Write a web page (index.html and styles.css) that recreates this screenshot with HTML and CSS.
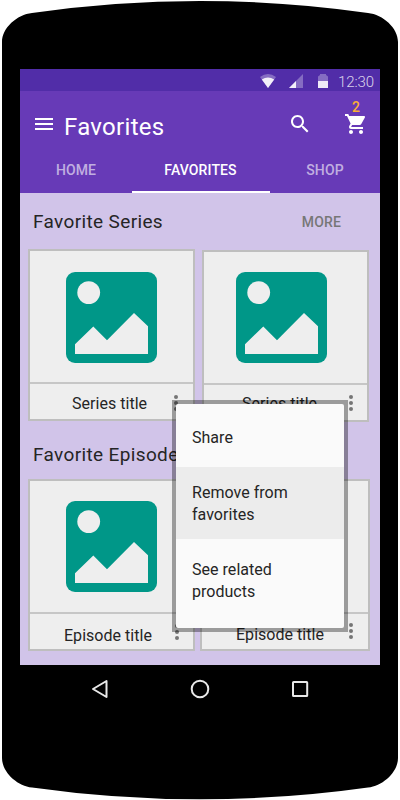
FILE: index.html
```html
<!DOCTYPE html>
<html lang="en">
<head>
<meta charset="utf-8">
<title>Favorites</title>
<link rel="stylesheet" href="styles.css">
</head>
<body>
<svg class="defs" width="0" height="0" aria-hidden="true">
  <symbol id="picture" viewBox="0 0 91 91">
    <rect width="91" height="91" rx="9" fill="#009788"/>
    <circle cx="22.7" cy="20.6" r="11.4" fill="#eee"/>
    <path d="M9 82V72.3L27.3 54.5 41 68.2 68 41 82 54.3V82z" fill="#eee"/>
  </symbol>
  <symbol id="dots" viewBox="0 0 4 16">
    <circle cx="2" cy="2" r="2"/><circle cx="2" cy="8" r="2"/><circle cx="2" cy="14" r="2"/>
  </symbol>
</svg>
<div class="phone">
  <svg class="body" viewBox="0 0 400 800" aria-hidden="true">
    <path d="M2 42C2 28 17 14.5 32 13Q115 1 200 1T368 13C383 14.5 398 28 398 42V758C398 772 383 786 368 787.5Q285 799.300 200 799.300T32 787.500C17 786 2 772 2 758z"/>
  </svg>
  <div class="screen">
    <div class="status">
      <svg class="wifi" width="16" height="14" viewBox="0 0 16 14"><path d="M0 3Q8-3 16 3L8 14z" opacity=".3"/><path d="M1.800 5.400Q8 1.700 14.200 5.400L8 14z" opacity=".9"/></svg>
      <svg class="signal" width="14" height="14" viewBox="0 0 14 14"><path d="M0 14L14 0V14z" opacity=".3"/><path d="M0 14L7 7V14z" opacity=".9"/></svg>
      <svg class="battery" width="10" height="14" viewBox="0 0 10 14"><path d="M0 7V2.500L2 1V0H8V1L10 2.500V7z" opacity=".3"/><path d="M0 7H10V14H0z" opacity=".9"/></svg>
      <span class="time">12:30</span>
    </div>
    <header class="appbar">
      <div class="toolbar">
        <svg class="burger" width="18" height="12" viewBox="0 0 18 12"><path d="M0 0H18V2H0zM0 5H18V7H0zM0 10H18V12H0z"/></svg>
        <h1>Favorites</h1>
        <svg class="search" width="24" height="24" viewBox="0 0 24 24"><path d="M15.500 14h-.79l-.28-.27C15.410 12.590 16 11.110 16 9.500 16 5.910 13.090 3 9.500 3S3 5.910 3 9.500 5.910 16 9.500 16c1.610 0 3.090-.59 4.230-1.570l.27.28v.79l5 4.990L20.490 19l-4.990-5zm-6 0C7.010 14 5 11.990 5 9.500S7.010 5 9.500 5 14 7.010 14 9.500 11.990 14 9.500 14z"/></svg>
        <div class="cart">
          <span class="badge">2</span>
          <svg width="24" height="24" viewBox="0 0 24 24"><path d="M7 18c-1.100 0-1.990.9-1.990 2S5.900 22 7 22s2-.9 2-2-.9-2-2-2zM1 2v2h2l3.600 7.590-1.350 2.450c-.16.28-.25.61-.25.960 0 1.100.9 2 2 2h12v-2H7.420c-.14 0-.25-.11-.25-.25l.03-.12.9-1.630h7.450c.75 0 1.410-.41 1.750-1.030l3.580-6.490c.08-.14.12-.31.12-.48 0-.55-.45-1-1-1H5.210l-.94-2H1zm16 16c-1.100 0-1.990.9-1.990 2s.89 2 1.990 2 2-.9 2-2-.9-2-2-2z"/></svg>
        </div>
      </div>
      <nav class="tabs">
        <span class="tab">HOME</span>
        <span class="tab active">FAVORITES</span>
        <span class="tab">SHOP</span>
      </nav>
    </header>
    <main>
      <div class="heading"><h2>Favorite Series</h2><span class="more">MORE</span></div>
      <div class="cards">
        <article class="card">
          <div class="art"><svg><use href="#picture"/></svg></div>
          <div class="caption"><span>Series title</span><svg class="dots"><use href="#dots"/></svg></div>
        </article>
        <article class="card lower">
          <div class="art"><svg><use href="#picture"/></svg></div>
          <div class="caption"><span>Series title</span><svg class="dots"><use href="#dots"/></svg></div>
        </article>
      </div>
      <div class="heading second"><h2>Favorite Episodes</h2></div>
      <div class="cards episodes">
        <article class="card">
          <div class="art"><svg><use href="#picture"/></svg></div>
          <div class="caption"><span>Episode title</span><svg class="dots"><use href="#dots"/></svg></div>
        </article>
        <article class="card wide">
          <div class="art"><svg><use href="#picture"/></svg></div>
          <div class="caption"><span>Episode title</span><svg class="dots"><use href="#dots"/></svg></div>
        </article>
      </div>
    </main>
    <div class="menu">
      <div class="item share">Share</div>
      <div class="item remove">Remove from favorites</div>
      <div class="item related">See related products</div>
    </div>
  </div>
  <div class="navkeys">
    <svg width="18" height="20" viewBox="0 0 18 20"><path d="M15.500 2V18L2 10z"/></svg>
    <svg width="20" height="20" viewBox="0 0 20 20"><circle cx="10" cy="10" r="8.300"/></svg>
    <svg width="18" height="20" viewBox="0 0 18 20"><rect x="2" y="2.900" width="14.200" height="14.200" rx=".6"/></svg>
  </div>
</div>
</body>
</html>
```
FILE: styles.css
```css
* { box-sizing: border-box; }
body { margin: 0; background: #fff; font-family: Roboto, sans-serif; color: #252525; }
svg { display: block; flex: none; }
.defs { position: absolute; }
.phone { position: relative; width: 400px; height: 800px; padding: 69px 20px 0; overflow: hidden; }
.body { position: absolute; left: 0; top: 0; width: 400px; height: 800px; }
.screen { position: relative; width: 360px; height: 596px; background: #d1c4e9; }

.status { display: flex; align-items: flex-start; height: 22px; padding: 5px 6px 0 0; background: #512da8; fill: #fff; }
.wifi { margin-left: 240px; }
.signal { margin-left: 13px; }
.battery { margin-left: 15px; }
.time { margin: -2px 0 0 auto; font-size: 15px; font-weight: 300; line-height: 20px; letter-spacing: -.1px; color: rgba(255, 255, 255, .8); }

.appbar { height: 102px; background: #673ab7; fill: #fff; }
.toolbar { display: flex; align-items: center; height: 66px; padding-left: 15px; color: #fff; }
.burger { margin-right: 11px; }
h1 { width: 222px; margin: 5px 0 0; font-size: 24px; font-weight: 400; line-height: 32px; letter-spacing: .3px; }
.search { margin-left: 2px; }
.cart { position: relative; margin-left: 32px; }
.badge { position: absolute; left: 8px; top: -13px; font-size: 14px; font-weight: 500; line-height: 16px; color: #fbb034; }
.tabs { display: grid; grid-template-columns: 112px 138px 110px; height: 36px; }
.tab { padding: 5px 1px 0 0; border-bottom: 2px solid transparent; text-align: center; font-size: 14px; font-weight: 500; line-height: 16px; letter-spacing: .12px; color: rgba(255, 255, 255, .6); }
.tab:first-child, .tab:last-child { padding-right: 0; }
.active { color: #fff; border-color: #fff; }

.heading { display: flex; justify-content: space-between; align-items: center; height: 56px; padding: 0 39px 0 13px; }
h2 { margin: 0; font-size: 19px; font-weight: 400; letter-spacing: .36px; white-space: nowrap; }
.more { padding-top: 1px; font-size: 14px; font-weight: 500; letter-spacing: .15px; color: #777; }
.second { height: 57px; padding-top: 7px; }
.cards { display: flex; align-items: flex-start; gap: 7px; padding-left: 8px; }
.episodes { gap: 5px; }
.card { width: 167px; border: 2px solid #bebebe; background: #eee; }
.lower { margin-top: 1px; }
.wide { width: 170px; }
.art { height: 133px; padding: 21px 0 0 36px; border-bottom: 2px solid #c6c6c6; }
.art svg { width: 91px; height: 91px; }
.lower .art { padding: 20px 0 0 32px; }
.episodes .art { padding-top: 20px; }
.caption { display: flex; align-items: center; justify-content: space-between; height: 35px; padding: 3px 15px 0 42px; font-size: 16px; letter-spacing: .03px; }
.dots { width: 4px; height: 16px; fill: #757575; }
.lower .caption { padding: 0 14px 0 38px; }
.lower .caption span { padding-top: 2px; }
.episodes .caption { padding: 7px 14px 0 34px; }
.episodes .dots { margin-top: -6px; }
.wide .caption { padding: 5px 15px 0 34px; }

.menu { position: absolute; left: 156px; top: 335px; isolation: isolate; width: 168px; height: 224px; }
.menu::before { content: ""; position: absolute; z-index: -1; inset: -4px; background: rgba(0, 0, 0, .35); }
.item { padding-left: 16px; font-size: 16px; line-height: 22px; letter-spacing: .03px; background: #fafafa; }
.share { height: 63px; padding-top: 23px; border-radius: 2px 2px 0 0; }
.remove { height: 72px; padding: 15px 40px 0 16px; background: #ececec; }
.related { height: 89px; padding: 20px 60px 0 16px; border-radius: 0 0 2px 2px; }

.navkeys { position: relative; display: flex; align-items: center; justify-content: space-between; height: 48px; padding: 0 71px; fill: none; stroke: #e8e8e8; stroke-width: 2; stroke-linejoin: round; }
```
